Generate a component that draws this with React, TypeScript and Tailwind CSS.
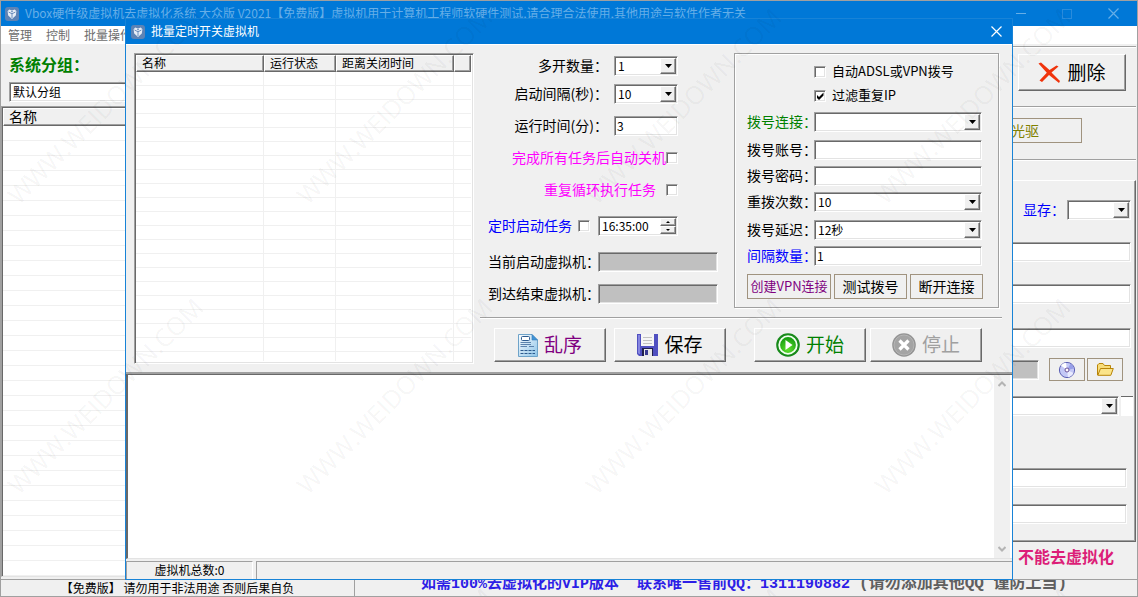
import React from "react";

const SUNKEN =
  "border border-t-[#a0a0a0] border-l-[#a0a0a0] border-r-white border-b-white shadow-[inset_1px_1px_#696969,inset_-1px_-1px_#e3e3e3]";
const RAISED =
  "border border-t-white border-l-white border-r-[#696969] border-b-[#696969] shadow-[inset_-1px_-1px_#a0a0a0]";
const FLAT = "border border-[#a0937f] bg-[#f0f0f0]";

function AppIcon() {
  return (
    <svg viewBox="0 0 14 14" className="size-3.5 shrink-0" aria-hidden="true">
      <rect width="14" height="14" rx="3" fill="#5d83b5" />
      <path d="M4.2 2.4 7 3.4 9.8 2.4 11.4 4.2 10.8 8.4 7 12 3.2 8.4 2.6 4.2Z" fill="#e6edf6" />
      <path d="M3.6 5 7 6.8 10.4 5M7 6.8V11" stroke="#5d83b5" strokeWidth=".9" fill="none" />
      <circle cx="7" cy="4.6" r=".8" fill="#5d83b5" />
    </svg>
  );
}

function CrossGlyph() {
  return (
    <svg viewBox="0 0 11 11" className="size-[11px]" aria-hidden="true">
      <path d="M.5 .5 10.5 10.5M10.5 .5 .5 10.5" stroke="currentColor" strokeWidth="1.2" />
    </svg>
  );
}

function DeleteIcon() {
  return (
    <svg viewBox="0 0 23 22" className="h-[22px] w-[23px]" aria-hidden="true">
      <path d="M.5 1.5 3 .5 11.5 8 18.5 3.5 20.5 4.5 13.5 10.5 22 19 21 21 11 13 4 20 1.5 18.5 8.8 10.8Z" fill="#f0340c" />
    </svg>
  );
}

function PageIcon() {
  return (
    <svg viewBox="0 0 20 23" className="h-[23px] w-5" aria-hidden="true">
      <defs>
        <linearGradient id="page" x1="0" y1="0" x2="1" y2="1">
          <stop offset="0" stopColor="#fafdff" />
          <stop offset="1" stopColor="#8fc4e8" />
        </linearGradient>
      </defs>
      <path d="M.5 .5H14L19.5 6V22.5H.5Z" fill="url(#page)" stroke="#6ea3c9" />
      <path d="M14 .5V6H19.5Z" fill="#3f93d6" stroke="#3a7eb8" strokeWidth=".6" />
      <rect x="3.5" y="2.5" width="8" height="4" rx="1" fill="#fff" stroke="#2d5a8e" />
      <path d="M2.5 8.5H13M2.5 10.5H13M2.5 12.5H9M11 12.5H16" stroke="#5c83ad" />
      <path d="M2.5 16.5H17M2.5 19.5H17" stroke="#2d5a8e" strokeDasharray="3 1" />
    </svg>
  );
}

function DiskIcon() {
  return (
    <svg viewBox="0 0 21 22" className="h-[22px] w-[21px]" aria-hidden="true">
      <path d="M0 0H21V22H2L0 20Z" fill="#5050c0" />
      <path d="M1 1H3V20H2L1 19Z" fill="#8585e0" />
      <rect x="4" width="13" height="12" fill="#f5f5f5" />
      <path d="M6 3.5H15M6 6.5H15M6 9.5H15" stroke="#c2c2c2" />
      <rect x="5" y="14" width="11" height="8" fill="#20204c" />
      <rect x="7" y="15" width="8" height="7" fill="#e8e8e8" />
      <rect x="8" y="16" width="3" height="5" fill="#3a3a90" />
    </svg>
  );
}

function StartIcon() {
  return (
    <svg viewBox="0 0 24 24" className="size-6" aria-hidden="true">
      <defs>
        <radialGradient id="go" cx=".5" cy=".75" r=".7">
          <stop offset="0" stopColor="#5fe02c" />
          <stop offset="1" stopColor="#129a10" />
        </radialGradient>
      </defs>
      <circle cx="12" cy="12" r="11.8" fill="#178a1a" />
      <circle cx="12" cy="12" r="8.8" fill="url(#go)" stroke="#f2fff0" strokeWidth="1.8" />
      <path d="M9.5 7 16.5 12 9.5 17Z" fill="#fff" />
    </svg>
  );
}

function StopIcon() {
  return (
    <svg viewBox="0 0 24 24" className="size-6" aria-hidden="true">
      <circle cx="12" cy="12" r="11.8" fill="#949494" />
      <circle cx="12" cy="12" r="10" fill="#a4a4a4" stroke="#b6b6b6" />
      <path d="M7.5 7.5 16.5 16.5M16.5 7.5 7.5 16.5" stroke="#fff" strokeWidth="3.2" />
    </svg>
  );
}

function DiscIcon() {
  return (
    <svg viewBox="0 0 18 18" className="size-[18px]" aria-hidden="true">
      <circle cx="9" cy="9" r="7.6" fill="#c3c8f6" stroke="#5b5fb4" />
      <path d="M9 9 3 4.5A7.2 7.2 0 0 1 8 1.8Z" fill="#fff" />
      <path d="M9 9 15.5 12A7.2 7.2 0 0 1 10 16.2Z" fill="#e9ebff" />
      <path d="M9 9 12.5 2.8A7.2 7.2 0 0 1 16 7.5Z" fill="#979fe8" />
      <circle cx="9" cy="9" r="2" fill="#fff" stroke="#6a4f96" />
    </svg>
  );
}

function FolderIcon() {
  return (
    <svg viewBox="0 0 17 13" className="h-[13px] w-[17px]" aria-hidden="true">
      <path d="M.5 12V2L2 .5H6L7.5 2.5H13.5V5" fill="#f7dc7a" stroke="#b88408" />
      <path d="M.8 12.3 3.5 5.5H16.3L13.8 12.3Z" fill="#fbe48a" stroke="#b88408" />
    </svg>
  );
}

function ArrowBox() {
  return (
    <span className={`pointer-events-none absolute inset-y-0.5 right-0.5 flex w-4 items-center justify-center bg-[#f0f0f0] ${RAISED}`}>
      <svg viewBox="0 0 7 4" className="h-1 w-[7px]" aria-hidden="true">
        <path d="M0 0H7L3.5 4Z" fill="#000" />
      </svg>
    </span>
  );
}

type FieldProps = { id: string; label?: string; value?: string; width: string };

function Combo({ id, label, value = "", width }: FieldProps) {
  return (
    <div className={`relative h-5 shrink-0 ${width}`}>
      <select id={id} aria-label={label} className={`block h-5 w-full appearance-none rounded-none bg-white pl-[3px] text-xs text-black outline-none ${SUNKEN}`}>
        <option>{value}</option>
      </select>
      <ArrowBox />
    </div>
  );
}

function Field({ id, label, value = "", width, gray }: FieldProps & { gray?: boolean }) {
  return (
    <input
      id={id}
      aria-label={label}
      defaultValue={value}
      readOnly={gray}
      className={`block h-5 shrink-0 rounded-none px-0.5 pb-0.5 text-xs text-black outline-none ${gray ? "bg-[#c0c0c0]" : "bg-white"} ${width} ${SUNKEN}`}
    />
  );
}

function Check({ id, on }: { id: string; on?: boolean }) {
  return (
    <span className="relative size-3 shrink-0">
      <input id={id} type="checkbox" defaultChecked={on} className={`peer block size-3 appearance-none bg-white ${SUNKEN}`} />
      <svg viewBox="0 0 12 12" className="pointer-events-none absolute inset-0 hidden size-3 peer-checked:block" aria-hidden="true">
        <path d="M3 5V8L5 10 9.5 5.5V2.5L5 7Z" fill="#000" />
      </svg>
    </span>
  );
}

function Rule() {
  return <hr className="h-0.5 border-0 border-t border-b border-t-[#a0a0a0] border-b-white" />;
}

function BigButton({ icon, text, tone, disabled }: { icon: React.ReactNode; text: string; tone: string; disabled?: boolean }) {
  return (
    <button disabled={disabled} className={`flex h-[34px] w-28 items-center justify-center gap-1.5 text-[19px] leading-6 ${tone} ${RAISED}`}>
      {icon}
      <span className="pb-0.5">{text}</span>
    </button>
  );
}

function TaskTable() {
  const rows = Array.from({ length: 21 });
  return (
    <div className={`h-[311px] min-w-0 flex-1 overflow-hidden bg-white p-0.5 ${SUNKEN} pl-px pt-px`}>
      <div className="h-full overflow-hidden">
        <table className="w-full table-fixed border-separate border-spacing-0 text-left text-xs">
          <colgroup>
            <col className="w-32" />
            <col className="w-[72px]" />
            <col className="w-[118px]" />
            <col />
          </colgroup>
          <thead>
            <tr className="h-[17px]">
              {["名称", "运行状态", "距离关闭时间", ""].map((h, i) => (
                <th key={i} className={`h-[17px] overflow-hidden bg-[#f0f0f0] p-0 pb-0.5 pl-[5px] font-normal whitespace-nowrap leading-[13px] ${RAISED}`}>
                  {h}
                </th>
              ))}
            </tr>
          </thead>
          <tbody>
            {rows.map((_, r) => (
              <tr key={r}>
                <td className="h-3.5 border-r border-b border-[#f0f0f0] p-0" />
                <td className="h-3.5 border-r border-b border-[#f0f0f0] p-0" />
                <td className="h-3.5 border-r border-b border-[#f0f0f0] p-0" />
                <td className="h-3.5 border-b border-[#f0f0f0] p-0" />
              </tr>
            ))}
          </tbody>
        </table>
      </div>
    </div>
  );
}

function SchedulePanel() {
  const label = "w-32 shrink-0 text-right whitespace-nowrap";
  return (
    <div className="flex w-[254px] shrink-0 flex-col pt-[3px] text-sm leading-[18px]">
      <div className="flex h-5 gap-1.5">
        <label htmlFor="count" className={label}>多开数量：</label>
        <Combo id="count" value="1" width="w-16" />
      </div>
      <div className="mt-2 flex h-5 gap-1.5">
        <label htmlFor="interval" className={label}>启动间隔(秒)：</label>
        <Combo id="interval" value="10" width="w-16" />
      </div>
      <div className="mt-3 flex h-5 gap-1.5">
        <label htmlFor="runtime" className={label}>运行时间(分)：</label>
        <Field id="runtime" value="3" width="w-16" />
      </div>
      <div className="mt-3 flex h-5 w-[198px] items-center justify-end text-[#ff00ff]">
        <label htmlFor="shutdown" className="self-start">完成所有任务后自动关机</label>
        <Check id="shutdown" />
      </div>
      <div className="mt-3 flex h-5 w-[198px] items-center justify-end gap-2.5 text-[#ff00ff]">
        <label htmlFor="loop" className="self-start">重复循环执行任务</label>
        <Check id="loop" />
      </div>
      <div className="mt-4 flex h-5 items-center pl-2 text-[#0000ff]">
        <label htmlFor="timed" className="mr-1.5 self-start">定时启动任务</label>
        <Check id="timed" />
        <div className={`ml-2 flex h-5 w-20 bg-white pr-px ${SUNKEN}`}>
          <input aria-label="定时启动任务" defaultValue="16:35:00" className="min-w-0 flex-1 pl-[3px] text-xs text-black outline-none" />
          <div className="my-px flex w-4 flex-col">
            <button aria-label="增加" className={`flex h-2 items-center justify-center bg-[#f0f0f0] ${RAISED}`}>
              <svg viewBox="0 0 4 2" className="h-0.5 w-1" aria-hidden="true"><path d="M0 2H4L2 0Z" /></svg>
            </button>
            <button aria-label="减少" className={`flex h-2 items-center justify-center bg-[#f0f0f0] ${RAISED}`}>
              <svg viewBox="0 0 4 2" className="h-0.5 w-1" aria-hidden="true"><path d="M0 0H4L2 2Z" /></svg>
            </button>
          </div>
        </div>
      </div>
      <div className="mt-4 flex h-5 pl-2">
        <label htmlFor="current" className="w-[110px] shrink-0 whitespace-nowrap">当前启动虚拟机：</label>
        <Field id="current" gray width="w-30" />
      </div>
      <div className="mt-3 flex h-5 pl-2">
        <label htmlFor="last" className="w-[110px] shrink-0 whitespace-nowrap">到达结束虚拟机：</label>
        <Field id="last" gray width="w-30" />
      </div>
    </div>
  );
}

function DialPanel() {
  const label = "w-[66px] shrink-0 whitespace-nowrap";
  return (
    <div className="w-[265px] shrink-0 border border-[#a0a0a0] pt-2 pl-3 text-sm leading-[18px] shadow-[1px_1px_#fff,inset_1px_1px_#fff]">
      <div className="flex h-5 items-center gap-1.5 pl-[67px] text-[13px]">
        <Check id="auto" />
        <label htmlFor="auto" className="self-start whitespace-nowrap">自动ADSL或VPN拨号</label>
      </div>
      <div className="mt-1 flex h-5 items-center gap-1.5 pl-[67px] text-[13px]">
        <Check id="filter" on />
        <label htmlFor="filter" className="self-start">过滤重复IP</label>
      </div>
      <div className="mt-1.5 flex h-5 gap-px">
        <label htmlFor="conn" className={`${label} text-[#008000]`}>拨号连接：</label>
        <Combo id="conn" width="w-42" />
      </div>
      <div className="mt-2 flex h-5 gap-px">
        <label htmlFor="account" className={label}>拨号账号：</label>
        <Field id="account" width="w-42" />
      </div>
      <div className="mt-1.5 flex h-5 gap-px">
        <label htmlFor="password" className={label}>拨号密码：</label>
        <Field id="password" width="w-42" />
      </div>
      <div className="mt-1.5 flex h-5 gap-px">
        <label htmlFor="retry" className={label}>重拨次数：</label>
        <Combo id="retry" value="10" width="w-42" />
      </div>
      <div className="mt-2 flex h-5 gap-px">
        <label htmlFor="delay" className={label}>拨号延迟：</label>
        <Combo id="delay" value="12秒" width="w-42" />
      </div>
      <div className="mt-1.5 flex h-5 gap-px">
        <label htmlFor="gapcount" className={`${label} text-[#0000ff]`}>间隔数量：</label>
        <Field id="gapcount" value="1" width="w-42" />
      </div>
      <div className="mt-2 flex gap-[3px] whitespace-nowrap">
        <button className={`h-[25px] w-[84px] pb-0.5 text-[13px] text-[#800080] ${FLAT}`}>创建VPN连接</button>
        <button className={`h-[25px] w-[73px] pb-0.5 ${FLAT}`}>测试拨号</button>
        <button className={`h-[25px] w-[73px] pb-0.5 ${FLAT}`}>断开连接</button>
      </div>
    </div>
  );
}

function TaskDialog() {
  return (
    <div role="dialog" aria-label="批量定时开关虚拟机" className="absolute inset-x-[124px] top-[17px] bottom-4 flex flex-col border border-[#1883d7] bg-[#f0f0f0]">
      <div className="flex h-[25px] shrink-0 items-center bg-[#0078d7] pr-2.5 pl-[5px] text-xs text-white">
        <AppIcon />
        <h2 className="ml-1.5 flex-1 pb-0.5">批量定时开关虚拟机</h2>
        <button aria-label="关闭"><CrossGlyph /></button>
      </div>
      <div className="flex shrink-0 gap-1.5 border-t border-b-2 border-t-white border-b-[#a0a0a0] pt-2 pr-2.5 pb-2 pl-2">
        <TaskTable />
        <div className="flex w-[522px] shrink-0 flex-col">
          <div className="flex h-[255px]">
            <SchedulePanel />
            <DialPanel />
          </div>
          <div className="mt-[9px]"><Rule /></div>
          <div className="mt-[9px] flex pl-3.5">
            <BigButton icon={<PageIcon />} text="乱序" tone="text-[#800080]" />
            <div className="ml-2"><BigButton icon={<DiskIcon />} text="保存" tone="text-black" /></div>
            <div className="ml-7"><BigButton icon={<StartIcon />} text="开始" tone="text-[#008000]" /></div>
            <div className="ml-1"><BigButton icon={<StopIcon />} text="停止" tone="text-[#a0a0a0]" disabled /></div>
          </div>
        </div>
      </div>
      <div className="flex min-h-0 flex-1 border-t border-l-2 border-t-[#696969] border-l-[#696969] border-b border-b-[#e3e3e3] bg-white">
        <textarea aria-label="运行日志" className="min-w-0 flex-1 resize-none overflow-hidden outline-none" />
        <div className="mr-0.5 flex w-4 flex-col items-center justify-between bg-[#f0f0f0] py-1.5 text-[#b4b4b4]">
          <svg viewBox="0 0 8 6" className="h-1.5 w-2" aria-hidden="true"><path d="M.5 5 4 1.5 7.5 5" fill="none" stroke="currentColor" strokeWidth="2" /></svg>
          <svg viewBox="0 0 8 6" className="h-1.5 w-2" aria-hidden="true"><path d="M.5 1 4 4.5 7.5 1" fill="none" stroke="currentColor" strokeWidth="2" /></svg>
        </div>
      </div>
      <div className="mt-0.5 flex h-[18px] shrink-0 gap-[3px] text-xs leading-4">
        <div className="w-[127px] border-t border-l border-r border-t-[#a0a0a0] border-l-[#a0a0a0] border-r-white text-center">虚拟机总数:0</div>
        <div className="flex-1 border-t border-l border-[#a0a0a0]" />
      </div>
    </div>
  );
}

function GroupList() {
  const rows = Array.from({ length: 30 });
  return (
    <aside className="flex w-60 shrink-0 flex-col">
      <h2 className="pt-2 pl-2 text-base leading-6 font-bold text-[#008000]">系统分组：</h2>
      <div className="mt-1.5 pl-2"><Combo id="group" label="系统分组" value="默认分组" width="w-full" /></div>
      <div className="mt-1 min-h-0 flex-1 overflow-hidden border border-t-[#a0a0a0] border-l-[#a0a0a0] border-b-[#e3e3e3] bg-white shadow-[inset_1px_1px_#696969] pt-px pl-px">
        <table className="w-full border-separate border-spacing-0 text-left text-sm">
          <thead>
            <tr><th className={`h-[18px] bg-[#f0f0f0] p-0 pb-0.5 pl-[5px] leading-[14px] font-normal ${RAISED}`}>名称</th></tr>
          </thead>
          <tbody>
            {rows.map((_, r) => (
              <tr key={r}><td className="h-[15px] border-b border-[#f0f0f0] p-0" /></tr>
            ))}
          </tbody>
        </table>
      </div>
    </aside>
  );
}

function MachinePanel() {
  return (
    <section className="flex min-w-0 flex-1 flex-col pt-0.5 pr-px">
      <Rule />
      <div className="mt-1.5 flex justify-end pr-2.5">
        <button className={`flex h-[37px] w-[108px] items-center justify-center gap-1.5 text-[19px] ${RAISED}`}>
          <DeleteIcon />
          <span>删除</span>
        </button>
      </div>
      <div className="mt-[15px]"><Rule /></div>
      <div className="mt-2.5 flex justify-end pr-[54px]">
        <button className={`h-[25px] w-[120px] pr-[42px] pb-0.5 text-right text-sm text-[#808000] ${FLAT}`}>弹出光驱</button>
      </div>
      <div className="mt-4"><Rule /></div>
      <div className={`mt-[19px] flex h-[362px] shrink-0 flex-col items-end pt-[19px] ${RAISED}`}>
        <div className="flex pr-1 text-sm leading-[18px] text-[#0000ff]">
          <label htmlFor="vram" className="w-11 whitespace-nowrap">显存：</label>
          <Combo id="vram" width="w-16" />
        </div>
        <div className="mt-[22px] pr-1"><Field id="path1" label="路径一" width="w-100" /></div>
        <div className="mt-[22px] pr-1"><Field id="path2" label="路径二" width="w-100" /></div>
        <div className="mt-6 pr-1"><Field id="path3" label="路径三" width="w-100" /></div>
        <div className="mt-2.5 flex items-center gap-0.5 pr-3">
          <div className="mr-2"><Field id="iso" label="光盘映像" gray width="w-60" /></div>
          <button aria-label="光盘" className={`flex h-[23px] w-9 items-center justify-center ${FLAT}`}><DiscIcon /></button>
          <button aria-label="打开文件夹" className={`flex h-[23px] w-9 items-center justify-center ${FLAT}`}><FolderIcon /></button>
        </div>
        <div className="mt-[15px] flex gap-0.5 pr-0.5">
          <Combo id="adapter" label="网卡" width="w-60" />
          <input aria-label="网卡编号" className="h-5 w-3 border-t border-b border-t-[#696969] border-b-white bg-white outline-none" />
        </div>
        <div className="mt-[52px] pr-2"><Field id="mac1" label="地址一" width="w-100" /></div>
        <div className="mt-4 pr-2"><Field id="mac2" label="地址二" width="w-100" /></div>
      </div>
      <p className="pt-0.5 pr-[22px] text-right text-base leading-6 font-bold text-[#dc1e78]">不能去虚拟化</p>
    </section>
  );
}

const MARKS = [
  "left-[22px] top-[177px]",
  "left-[311px] top-[177px]",
  "left-[600px] top-[177px]",
  "left-[889px] top-[177px]",
  "left-[22px] top-[467px]",
  "left-[311px] top-[467px]",
  "left-[600px] top-[467px]",
  "left-[889px] top-[467px]",
  "left-[22px] top-[757px]",
  "left-[311px] top-[757px]",
  "left-[600px] top-[757px]",
  "left-[889px] top-[757px]",
];

function Watermark() {
  return (
    <div aria-hidden="true" className="pointer-events-none absolute inset-0 overflow-hidden">
      {MARKS.map((place) => (
        <span key={place} className={`absolute origin-bottom-left -rotate-45 font-['Open_Sans'] text-[25px] leading-8 font-medium whitespace-nowrap text-black/5 ${place}`}>
          WWW.WEIDOWN.COM
        </span>
      ))}
    </div>
  );
}

export default function App() {
  return (
    <div className="relative flex h-screen flex-col overflow-hidden border border-[#a0a0a0] bg-[#f0f0f0] font-['Noto_Sans_CJK_SC',sans-serif] text-black">
      <header className="flex h-[25px] shrink-0 items-center bg-[#0078d7] pl-1 text-xs text-[#66aee7]">
        <AppIcon />
        <h1 className="ml-1.5 flex-1 pb-0.5 whitespace-nowrap">
          Vbox硬件级虚拟机去虚拟化系统 大众版 V2021【免费版】虚拟机用于计算机工程师软硬件测试,请合理合法使用,其他用途与软件作者无关
        </h1>
        <div className="flex items-center gap-9 pr-[18px]">
          <button aria-label="最小化" className="flex h-2.5 w-2.5 items-center"><span className="h-px w-2.5 bg-[#66aee7]" /></button>
          <button aria-label="最大化" className="size-2.5 border border-[#2a8cdc]" />
          <button aria-label="关闭"><CrossGlyph /></button>
        </div>
      </header>
      <nav className="flex h-[18px] shrink-0 items-center gap-3.5 bg-white pl-[7px] text-xs text-[#6d6d6d]">
        <button>管理</button>
        <button>控制</button>
        <button>批量操作</button>
      </nav>
      <main className="flex min-h-0 flex-1">
        <GroupList />
        <MachinePanel />
      </main>
      <footer className="mt-0.5 flex h-[17px] shrink-0 border-t border-[#a0a0a0] leading-4">
        <div className="w-[354px] border-r border-r-[#a0a0a0] text-center text-xs leading-4">【免费版】 请勿用于非法用途 否则后果自负</div>
        <div className="flex-1 overflow-hidden pl-[66px] font-['Liberation_Mono','Noto_Sans_CJK_SC',monospace] text-[15px] leading-[9px] font-bold whitespace-pre text-[#2d1ee6]">
          如需100%去虚拟化的VIP版本  联系唯一售前QQ：1311190882 <span className="text-base leading-[9px] text-[#5f5f5f]">(请勿添加其他QQ 谨防上当)</span>
        </div>
      </footer>
      <TaskDialog />
      <Watermark />
    </div>
  );
}
